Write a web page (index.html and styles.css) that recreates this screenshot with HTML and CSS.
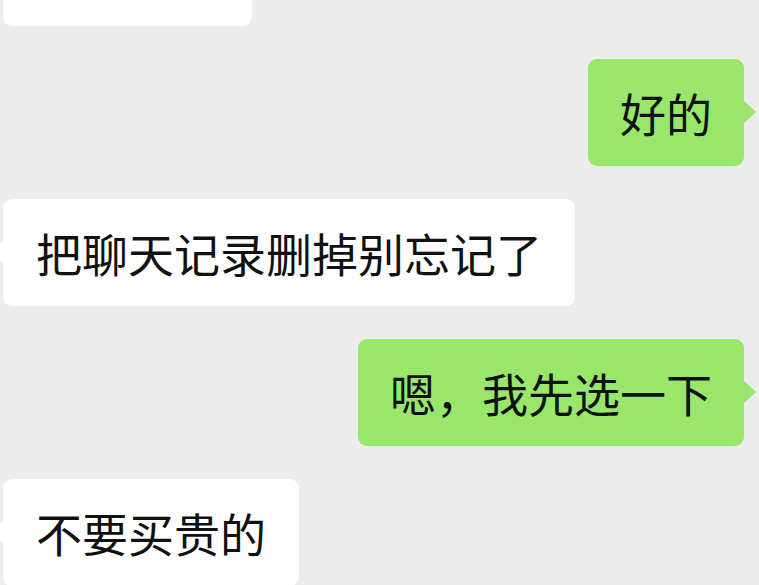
FILE: index.html
```html
<!DOCTYPE html>
<html lang="zh-CN">
<head>
    <meta charset="UTF-8">
    <title>聊天</title>
    <link rel="stylesheet" href="styles.css">
</head>
<body>
<div class="chat">
    <div class="row left">
        <div class="bubble white first"></div>
    </div>
    <div class="row right">
        <div class="bubble green">好的</div>
    </div>
    <div class="row left">
        <div class="bubble white">把聊天记录删掉别忘记了</div>
    </div>
    <div class="row right">
        <div class="bubble green">嗯，我先选一下</div>
    </div>
    <div class="row left">
        <div class="bubble white">不要买贵的</div>
    </div>
</div>
</body>
</html>
```

FILE: styles.css
```css
* {
    padding: 0;
    margin: 0;
    box-sizing: border-box;
}
html, body {
    height: 100%;
    overflow: hidden;
}
body {
    background-color: #ededed;
    font-family: "Noto Sans CJK SC", "Noto Sans", sans-serif;
    color: #111;
}
.chat {
    display: flex;
    flex-direction: column;
    gap: 33px;
    margin-top: -81px;
    padding: 0 15px 0 3px;
}
.row {
    display: flex;
}
.row.right {
    justify-content: flex-end;
}
.bubble {
    position: relative;
    height: 107px;
    padding: 0 33px;
    font-size: 46px;
    line-height: 107px;
    border-radius: 9px;
    white-space: nowrap;
}
.first {
    width: 249px;
}
.white {
    background-color: #fff;
}
.green {
    background-color: #98e66a;
    padding: 0 32px;
}
.green::after {
    content: "";
    position: absolute;
    top: 41px;
    right: -12px;
    border-top: 12px solid transparent;
    border-bottom: 12px solid transparent;
    border-left: 13px solid #98e66a;
}
.white::before {
    content: "";
    position: absolute;
    top: 41px;
    left: -12px;
    border-top: 12px solid transparent;
    border-bottom: 12px solid transparent;
    border-right: 13px solid #fff;
}
```
